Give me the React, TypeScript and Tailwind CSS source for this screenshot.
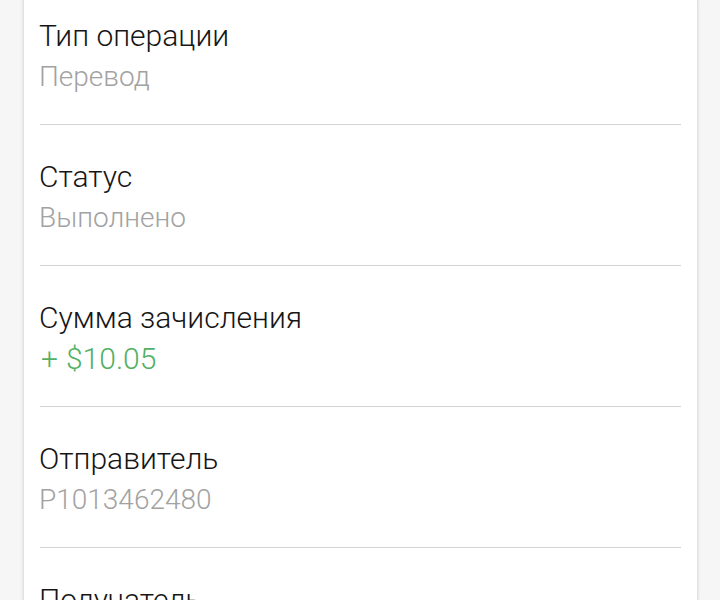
import React from "react";

const rows: { label: string; value: React.ReactNode; green?: boolean }[] = [
  { label: "Тип операции", value: "Перевод" },
  { label: "Статус", value: "Выполнено" },
  {
    label: "Сумма зачисления",
    value: (
      <>
        <span className="ml-[2px]">+</span>
        <span className="ml-[8px]">$10.05</span>
      </>
    ),
    green: true,
  },
  { label: "Отправитель", value: "P1013462480" },
  { label: "Получатель", value: "U0000000000" },
];

export default function App() {
  return (
    <div
      className="w-[720px] h-[600px] overflow-hidden bg-[#f6f6f6] flex"
      style={{ fontFamily: "Roboto, 'Noto Sans', sans-serif" }}
    >
      <div className="ml-[23px] w-[675px] h-full bg-white border-l border-r border-[#e2e2e2] shadow-[0_0_3px_rgba(0,0,0,0.12)] px-[16px] pt-[15px]">
        {rows.map((r, i) => (
          <div key={i}>
            <div className={i === 0 ? "pb-[27px]" : "pt-[31px] pb-[27px]"}>
              <div className="text-[30px] font-light leading-[41px] text-[#161616] -ml-[1px]">{r.label}</div>
              <div
                className={
                  "font-light leading-[41px] -ml-[1px] " +
                  (r.green ? "text-[30px] text-[#52b062]" : "text-[28px] text-[#a2a2a2]")
                }
              >
                {r.value}
              </div>
            </div>
            <div className="h-px bg-[#d4d4d4]" />
          </div>
        ))}
      </div>
    </div>
  );
}
